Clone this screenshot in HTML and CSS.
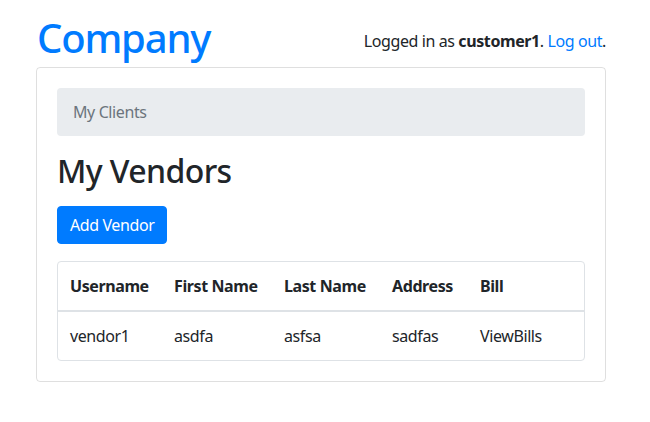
FILE: index.html
```html
<!DOCTYPE html>
<html>
<head>
<meta charset="utf-8">
<link rel="stylesheet" href="styles.css">
</head>
<body>
<div class="page">
  <header class="topbar">
    <h1 class="brand">Company</h1>
    <div class="login">Logged in as <b>customer1</b>. <a href="#">Log out</a>.</div>
  </header>
  <div class="card">
    <nav class="crumb">My Clients</nav>
    <h2 class="title">My Vendors</h2>
    <button class="btn">Add Vendor</button>
    <div class="tablebox">
      <table class="tbl">
        <thead>
          <tr>
            <th class="c1">Username</th>
            <th class="c2">First Name</th>
            <th class="c3">Last Name</th>
            <th class="c4">Address</th>
            <th class="c5">Bill</th>
          </tr>
        </thead>
        <tbody>
          <tr>
            <td>vendor1</td>
            <td>asdfa</td>
            <td>asfsa</td>
            <td>sadfas</td>
            <td>ViewBills</td>
          </tr>
        </tbody>
      </table>
    </div>
  </div>
</div>
</body>
</html>
```
FILE: styles.css
```css
* { box-sizing: border-box; }
body {
  margin: 0;
  font-family: "Segoe UI", "Noto Sans", "Open Sans", sans-serif;
  font-size: 16px;
  line-height: 1.5;
  color: #212529;
  background: #fff;
  letter-spacing: -0.4px;
}
.page {
  width: 570px;
  margin-left: 36px;
  padding-top: 7px;
}
.topbar {
  display: flex;
  justify-content: space-between;
  align-items: flex-end;
  height: 60px;
}
.brand {
  margin: 0 0 5px 1px;
  font-size: 40px;
  font-weight: 500;
  line-height: 1.2;
  color: #007bff;
  letter-spacing: -1.2px;
}
.login {
  padding-bottom: 14px;
}
.login b { font-weight: 700; }
.login a { color: #007bff; text-decoration: none; }
.card {
  border: 1px solid rgba(0,0,0,.125);
  border-radius: 4px;
  padding: 20px;
}
.crumb {
  background: #e9ecef;
  border-radius: 4px;
  padding: 12px 16px;
  color: #6c757d;
  margin-bottom: 16px;
}
.title {
  margin: 0 0 16px;
  font-size: 32px;
  font-weight: 500;
  line-height: 1.2;
  letter-spacing: -0.6px;
}
.btn {
  display: block;
  font-family: inherit;
  font-size: 16px;
  letter-spacing: -0.4px;
  line-height: 24px;
  padding: 6px 12px;
  color: #fff;
  background: #007bff;
  border: 1px solid #007bff;
  border-radius: 4px;
  margin-bottom: 17px;
}
.tablebox {
  border: 1px solid #dee2e6;
  border-radius: 4px;
}
.tbl {
  width: 100%;
  border-collapse: collapse;
  table-layout: fixed;
}
.tbl th, .tbl td {
  text-align: left;
  padding: 12px;
  line-height: 24px;
  white-space: nowrap;
}
.tbl th { font-weight: 700; border-bottom: 2px solid #dee2e6; }
.c1 { width: 104px; }
.c2 { width: 110px; }
.c3 { width: 108px; }
.c4 { width: 88px; }
```
